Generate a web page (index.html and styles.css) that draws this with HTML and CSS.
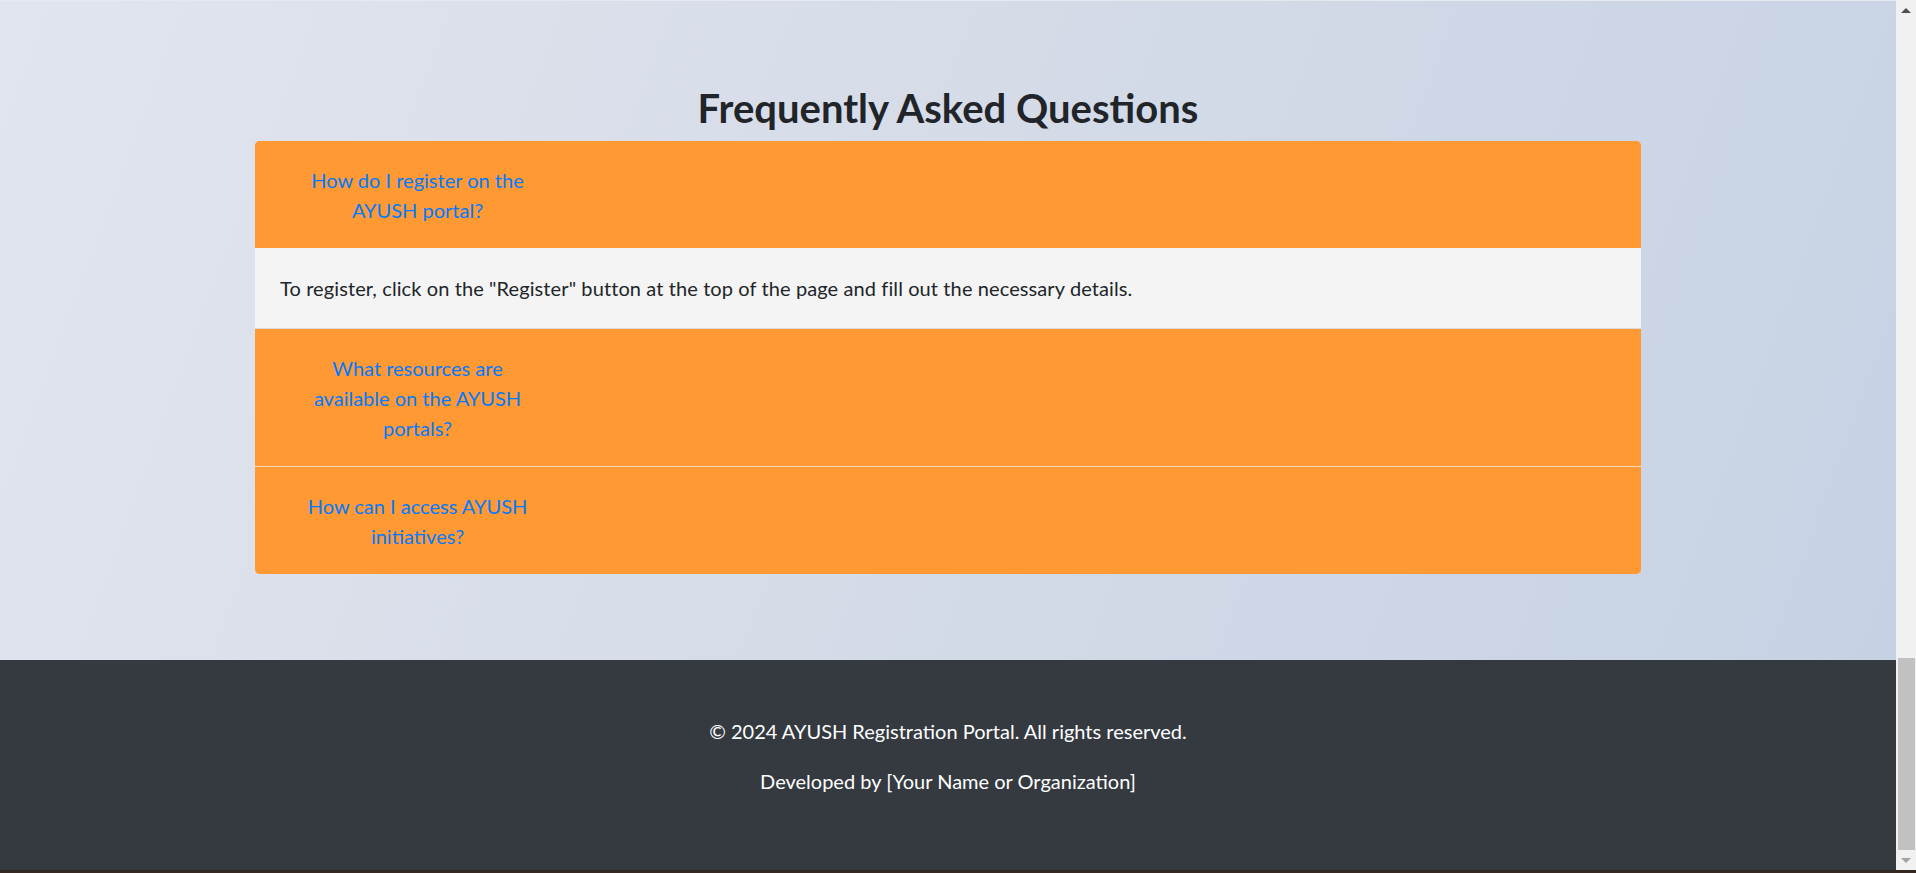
FILE: index.html
```html
<!DOCTYPE html>
<html lang="en">
<head>
<meta charset="utf-8">
<title>AYUSH Registration Portal - FAQ</title>
<link rel="stylesheet" href="styles.css">
</head>
<body>
<div class="window">
  <div class="page">
    <section class="faq">
      <h2 class="faq-title">Frequently Asked Questions</h2>
      <div class="accordion">
        <div class="item">
          <div class="item-header"><button class="q-btn">How do I register on the AYUSH portal?</button></div>
          <div class="item-body">To register, click on the "Register" button at the top of the page and fill out the necessary details.</div>
        </div>
        <div class="sep sep-grey"></div>
        <div class="item">
          <div class="item-header"><button class="q-btn">What resources are available on the AYUSH portals?</button></div>
        </div>
        <div class="sep sep-light"></div>
        <div class="item">
          <div class="item-header"><button class="q-btn">How can I access AYUSH initiatives?</button></div>
        </div>
      </div>
    </section>
    <footer class="footer">
      <p>© 2024 AYUSH Registration Portal. All rights reserved.</p>
      <p>Developed by [Your Name or Organization]</p>
    </footer>
  </div>
  <div class="scrollbar">
    <div class="sb-arrow sb-up"></div>
    <div class="sb-track"><div class="sb-thumb"></div></div>
    <div class="sb-arrow sb-down"></div>
  </div>
</div>
<div class="strip"></div>
</body>
</html>
```

FILE: styles.css
```css
html, body {
  margin: 0;
  padding: 0;
  height: 873px;
  overflow: hidden;
}

body {
  font-family: "Lato", "Open Sans", sans-serif;
  font-size: 20px;
  line-height: 30px;
  color: #212529;
  display: flex;
  flex-direction: column;
}

.window {
  display: flex;
  height: 870px;
}

.page {
  flex: 1;
  display: flex;
  flex-direction: column;
}

.faq {
  height: 660px;
  box-sizing: border-box;
  padding-top: 83px;
  background: linear-gradient(110deg, #e1e5ee 0%, #d6dce8 45%, #c6d2e4 100%);
  border-top: 1px solid #e6e9f0;
}

.faq-title {
  margin: 0 0 9px 0;
  text-align: center;
  font-size: 40px;
  line-height: 48px;
  font-weight: 700;
  color: #212529;
}

.accordion {
  width: 1386px;
  margin: 0 auto;
  background: #ff9933;
  border-radius: 5px;
  overflow: hidden;
}

.item-header {
  background: #ff9933;
  padding: 16px 25px;
}

.q-btn {
  display: block;
  width: 275px;
  padding: 7.5px 15px;
  border: 0;
  background: transparent;
  font-family: inherit;
  font-size: 20px;
  line-height: 30px;
  color: #007bff;
  text-align: center;
  cursor: pointer;
}

.item-body {
  background: #f4f4f4;
  padding: 25px;
  color: #212529;
  letter-spacing: 0.1px;
}

.sep {
  height: 1px;
}

.sep-grey {
  background: #dcdad8;
}

.sep-light {
  background: #f3d9bd;
}

.footer {
  flex: 1;
  background: #343a40;
  color: #ffffff;
  text-align: center;
  padding-top: 56px;
}

.footer p {
  margin: 0 0 20px 0;
}

.scrollbar {
  width: 20px;
  background: #f1f1f1;
  display: flex;
  flex-direction: column;
}

.sb-arrow {
  height: 20px;
  display: flex;
  align-items: center;
  justify-content: center;
}

.sb-up::before {
  content: "";
  border-left: 5px solid transparent;
  border-right: 5px solid transparent;
  border-bottom: 5px solid #505050;
}

.sb-down::before {
  content: "";
  border-left: 5px solid transparent;
  border-right: 5px solid transparent;
  border-top: 5px solid #a3a3a3;
}

.sb-track {
  flex: 1;
  display: flex;
  flex-direction: column;
  justify-content: flex-end;
  padding: 0 1px 0 2px;
}

.sb-thumb {
  height: 192px;
  background: #c1c1c1;
}

.strip {
  height: 3px;
  background: linear-gradient(#2d2722, #3a2a22);
}
```
